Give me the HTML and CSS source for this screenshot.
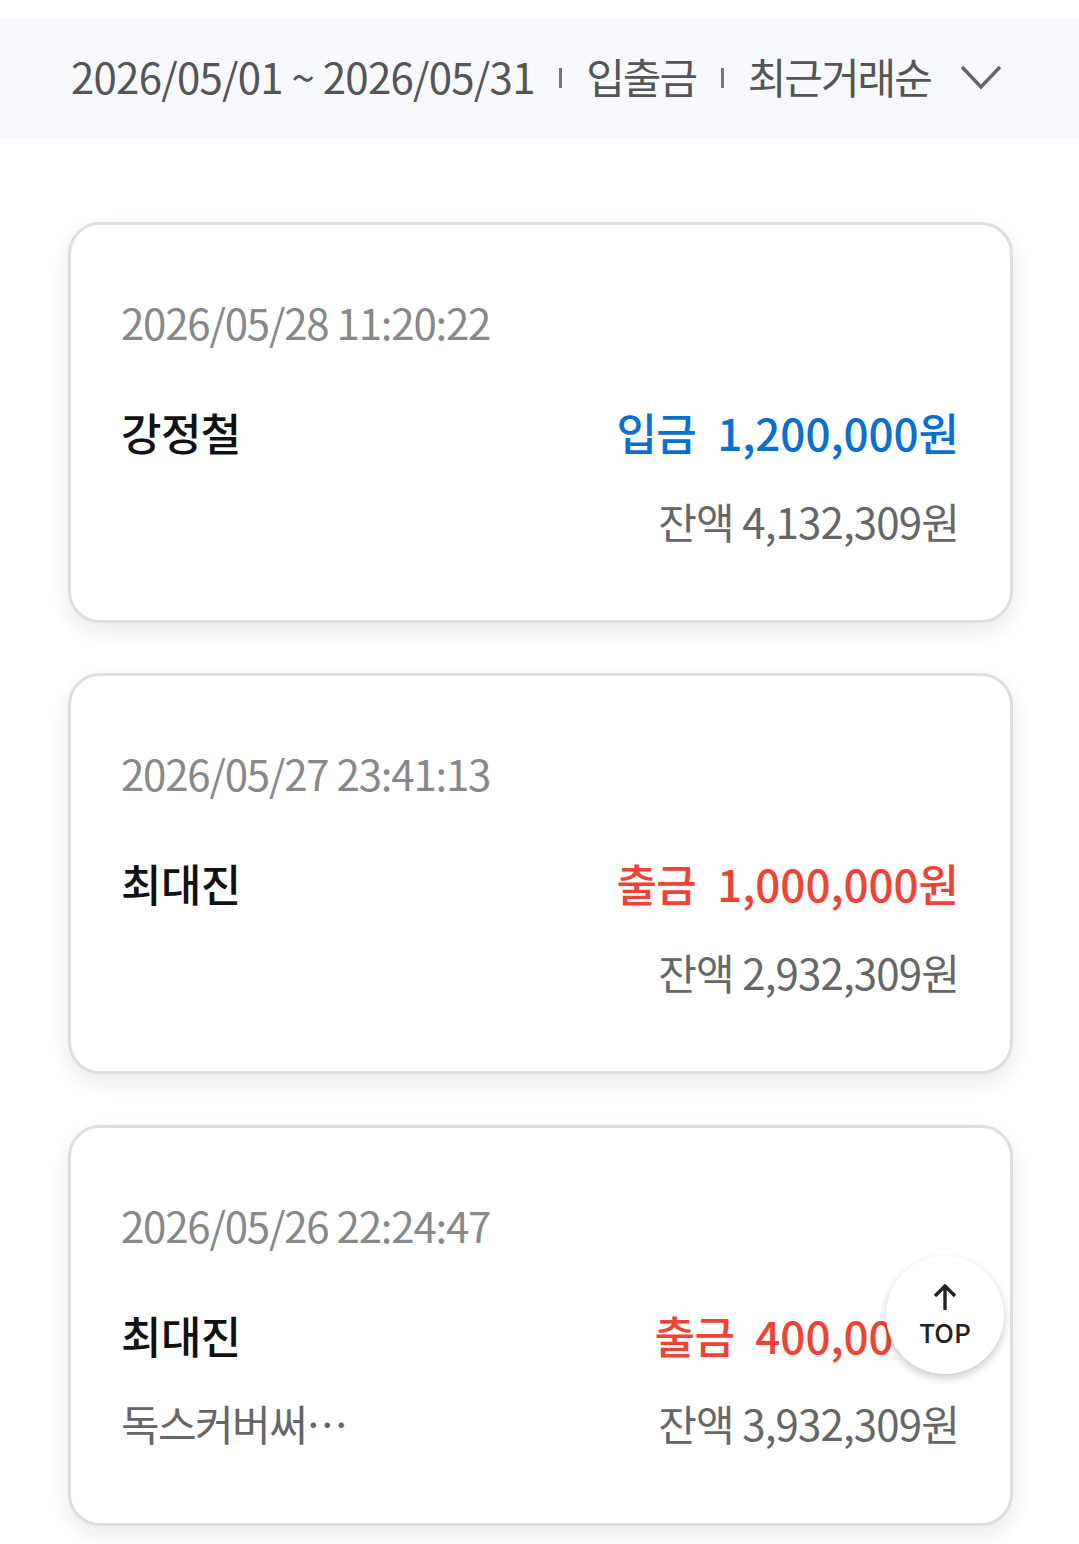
FILE: index.html
```html
<!DOCTYPE html>
<html lang="ko">
<head>
<meta charset="utf-8">
<title>거래내역</title>
<link rel="stylesheet" href="styles.css">
</head>
<body>
<header class="filter">
  <span class="num">2026/05/01 ~ 2026/05/31</span>
  <i class="sep"></i>
  <span>입출금</span>
  <i class="sep"></i>
  <span>최근거래순</span>
  <svg class="chevron" width="42" height="26" viewBox="0 0 42 26"><path d="M2 3 L21 23 L40 3" fill="none" stroke="#666" stroke-width="3.4"/></svg>
</header>
<main class="list">
  <article class="card">
    <div class="date">2026/05/28 11:20:22</div>
    <div class="row main-row"><span class="name">강정철</span><span class="amount in"><span>입금</span><span class="value">1,200,000원</span></span></div>
    <div class="row sub-row"><span class="memo"></span><span class="balance">잔액 4,132,309원</span></div>
  </article>
  <article class="card">
    <div class="date">2026/05/27 23:41:13</div>
    <div class="row main-row"><span class="name">최대진</span><span class="amount out"><span>출금</span><span class="value">1,000,000원</span></span></div>
    <div class="row sub-row"><span class="memo"></span><span class="balance">잔액 2,932,309원</span></div>
  </article>
  <article class="card">
    <div class="date">2026/05/26 22:24:47</div>
    <div class="row main-row"><span class="name">최대진</span><span class="amount out"><span>출금</span><span class="value">400,000원</span></span></div>
    <div class="row sub-row"><span class="memo">독스커버써⋯</span><span class="balance">잔액 3,932,309원</span></div>
  </article>
</main>
<button class="top" type="button">
  <svg width="26" height="27" viewBox="0 0 26 27"><path d="M13 26 V3 M3 12 L13 2 L23 12" fill="none" stroke="#222" stroke-width="3.4"/></svg>
  <span>TOP</span>
</button>
</body>
</html>
```
FILE: styles.css
```css
* { box-sizing: border-box; }
html, body { margin: 0; padding: 0; }
body {
  width: 1079px;
  height: 1544px;
  overflow: hidden;
  background: #fff;
  position: relative;
  font-family: "Noto Sans CJK KR", "Noto Sans", sans-serif;
  font-feature-settings: "calt" 0, "kern" 0, "ccmp" 0, "locl" 0;
  padding-top: 19px;
}
.filter {
  height: 118px;
  background: #f8f9fd;
  display: flex;
  align-items: center;
  padding: 0 0 6px 71px;
  font-size: 42px;
  letter-spacing: -2px;
  color: #555;
  white-space: nowrap;
}
.filter .num { letter-spacing: -.75px; }
.sep { width: 3px; height: 20px; background: #777; margin: 6px 24px 0 24.5px; }
.chevron { margin: 3px 0 0 29px; }
.list {
  padding: 85px 66px 0 68px;
  display: flex;
  flex-direction: column;
  gap: 50.4px;
}
.card {
  height: 401px;
  flex: none;
  border: 3px solid #dedede;
  border-radius: 32px;
  background: #fff;
  box-shadow: 0 8px 22px rgba(0,0,0,.09);
  padding: 68px 51px 0 50px;
}
.date { font-size: 42px; line-height: 58px; letter-spacing: -1.2px; color: #888; }
.row { display: flex; justify-content: space-between; align-items: center; white-space: nowrap; }
.main-row { margin-top: 52px; height: 58px; }
.sub-row { margin-top: 30px; height: 58px; }
.name { font-size: 44px; font-weight: 500; color: #111; letter-spacing: -.6px; }
.amount { font-size: 44px; font-weight: 500; letter-spacing: -.6px; display: flex; gap: 21px; }
.amount .value { letter-spacing: -.05px; }
.in { color: #0a6fd0; }
.out { color: #ee4335; }
.balance, .memo { font-size: 42px; letter-spacing: -.85px; color: #666; }
.memo { letter-spacing: -1.6px; }
.top {
  position: absolute;
  left: 886px;
  top: 1256px;
  width: 118px;
  height: 118px;
  border: 0;
  border-radius: 50%;
  background: #fff;
  box-shadow: 0 4px 8px rgba(0,0,0,.22);
  padding: 28px 0 0;
  display: flex;
  flex-direction: column;
  align-items: center;
  font-family: "Noto Sans CJK KR", sans-serif;
  font-size: 26px;
  line-height: 36px;
  font-weight: 500;
  color: #222;
}
.top span { margin-top: 3px; }
.top svg { display: block; }
```
